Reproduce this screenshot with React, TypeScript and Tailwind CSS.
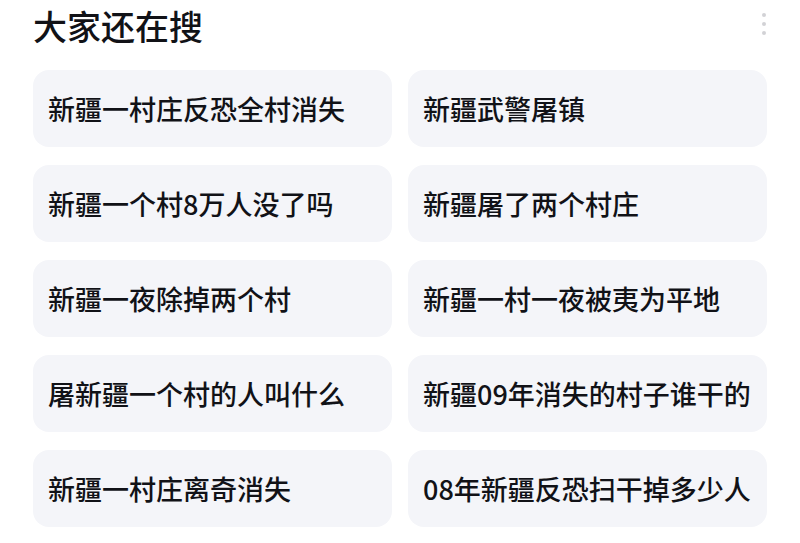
const queries = [
  "新疆一村庄反恐全村消失",
  "新疆武警屠镇",
  "新疆一个村8万人没了吗",
  "新疆屠了两个村庄",
  "新疆一夜除掉两个村",
  "新疆一村一夜被夷为平地",
  "屠新疆一个村的人叫什么",
  "新疆09年消失的村子谁干的",
  "新疆一村庄离奇消失",
  "08年新疆反恐扫干掉多少人",
];

function MoreButton() {
  return (
    <button className="flex h-[40px] w-[12px] flex-col items-center justify-center gap-[5px]">
      <span className="h-[4px] w-[4px] rounded-full bg-[#d2d2d6]" />
      <span className="h-[4px] w-[4px] rounded-full bg-[#d2d2d6]" />
      <span className="h-[4px] w-[4px] rounded-full bg-[#d2d2d6]" />
    </button>
  );
}

export default function App() {
  return (
    <div
      className="h-[543px] w-[800px] overflow-hidden bg-white px-[33px] text-[#111217]"
      style={{ fontFamily: '"Noto Sans CJK SC", "Noto Sans", sans-serif' }}
    >
      <div className="flex h-[70px] items-start justify-between">
        <h2 className="mt-[4px] text-[34px] font-medium leading-[44px]">大家还在搜</h2>
        <div className="mr-[-3px] mt-[4px]">
          <MoreButton />
        </div>
      </div>

      <div className="grid grid-cols-2 gap-x-[16px] gap-y-[18px]">
        {queries.map((q) => (
          <div
            key={q}
            className="flex h-[77px] items-center rounded-[16px] bg-[#f4f5f9] pl-[15px] text-[27px] font-medium leading-none"
          >
            {q}
          </div>
        ))}
      </div>
    </div>
  );
}
